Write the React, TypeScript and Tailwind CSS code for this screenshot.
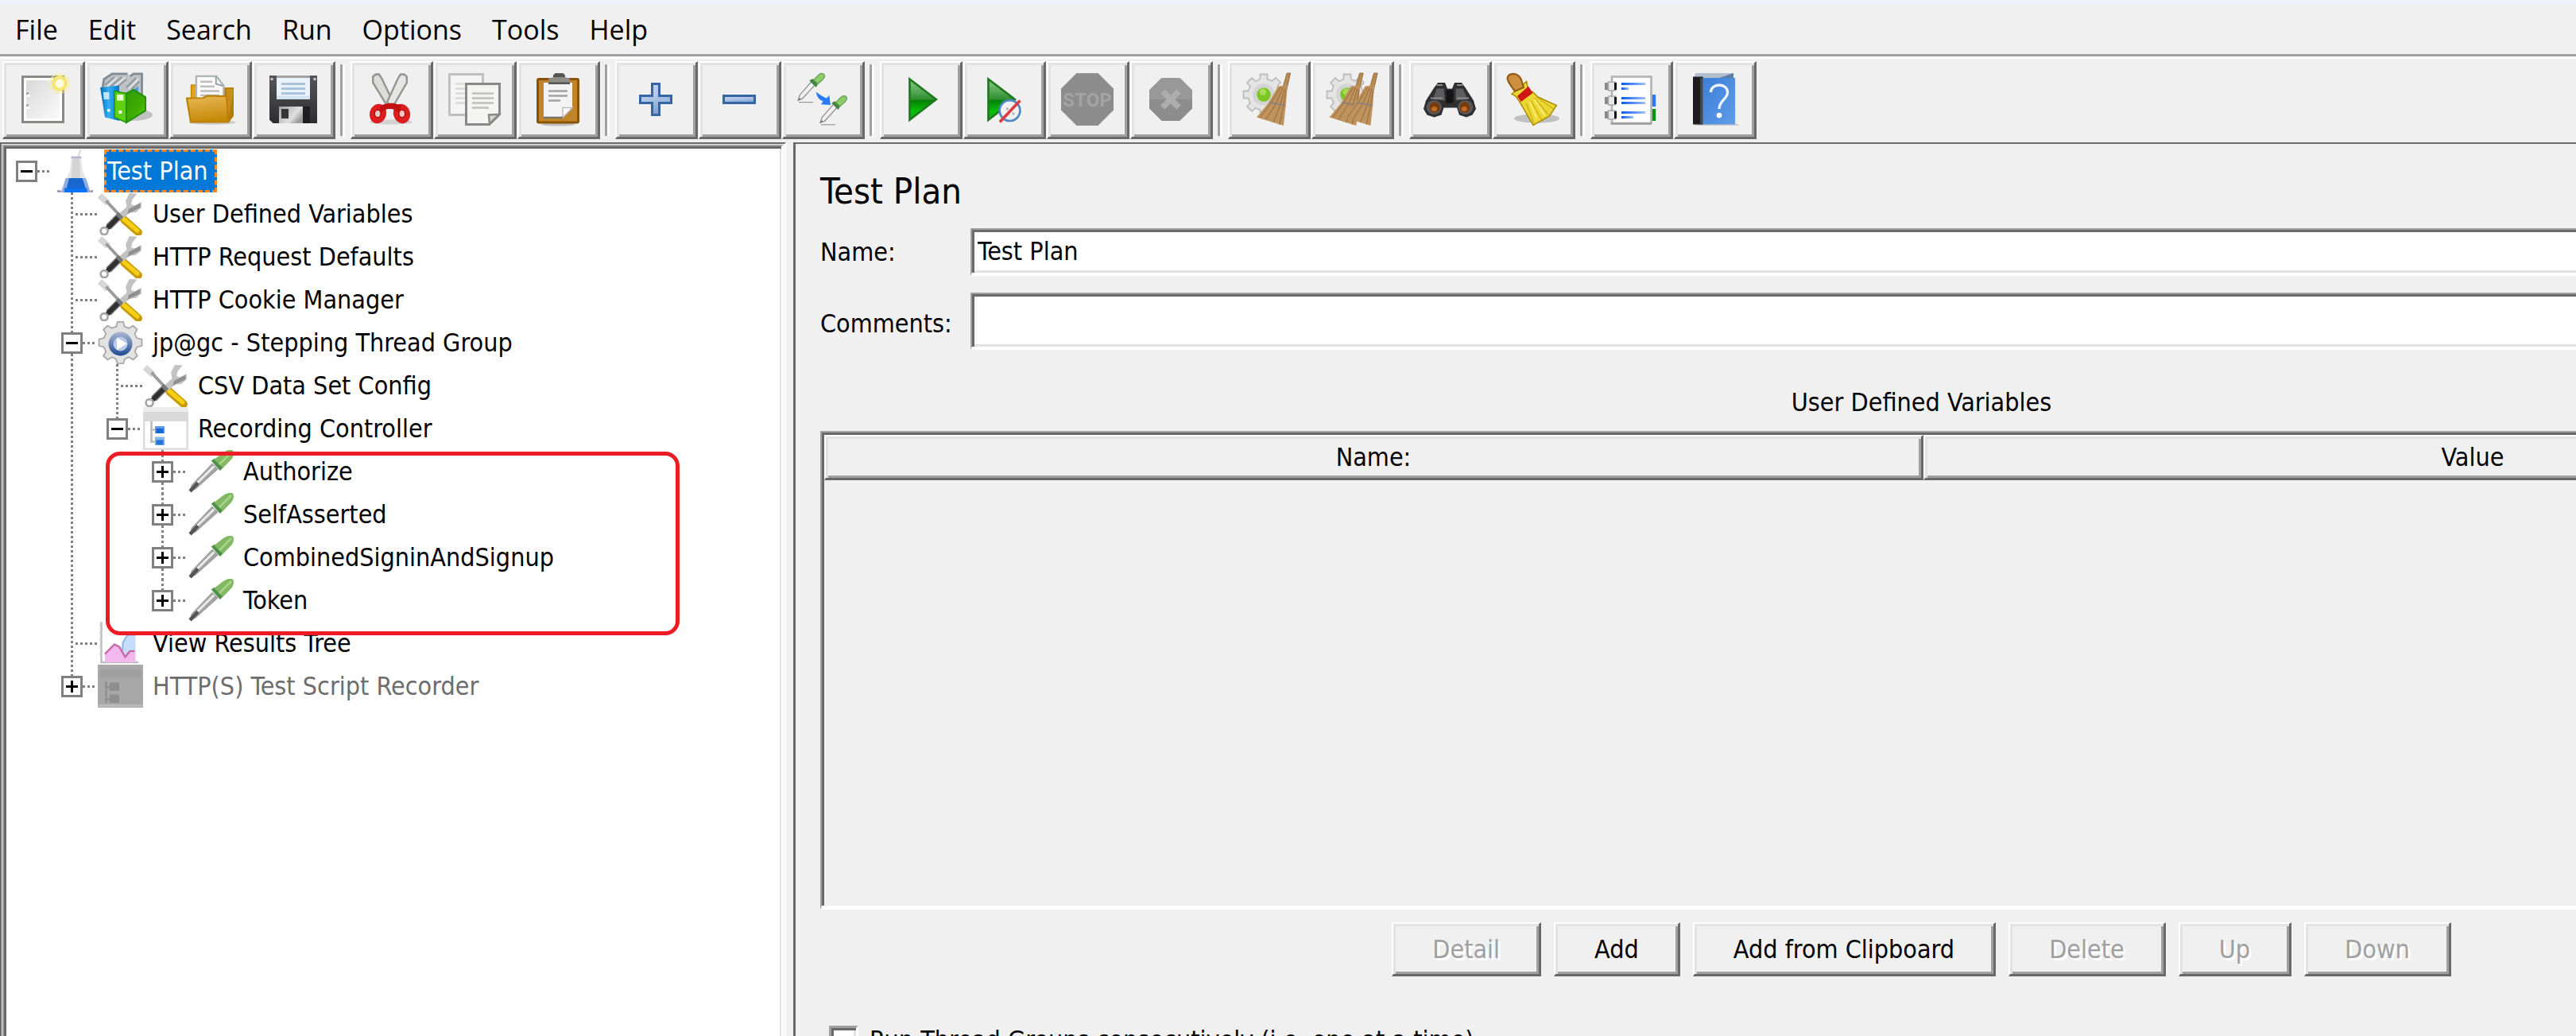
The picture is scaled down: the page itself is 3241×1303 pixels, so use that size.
import React from 'react';

type Icon = () => React.ReactElement;

/* ---------- toolbar icons, drawn on a 22-unit grid ---------- */

function Glyph({ children }: { children: React.ReactNode }) {
  return (
    <svg viewBox="0 0 22 22" className="size-[66px] overflow-visible" aria-hidden="true">
      {children}
    </svg>
  );
}

const NewIcon: Icon = () => (
  <Glyph>
    <defs>
      <linearGradient id="newPage" x1="0" y1="0" x2="1" y2="1">
        <stop offset="0" stopColor="#d9d9d9" />
        <stop offset="1" stopColor="#fafafa" />
      </linearGradient>
    </defs>
    <rect x="2.5" y="1.5" width="17" height="19" fill="#fff" stroke="#888a85" />
    <rect x="4" y="3" width="14" height="16" fill="url(#newPage)" />
    <path d="M4 8h1v1H4zM4 13h1v1H4z" fill="#aaa" />
    <path d="M4.3 9h1.2v1H4.3zM4.3 14h1.2v1H4.3z" fill="#fff" />
    <circle cx="18" cy="4.3" r="2.6" fill="#fffbe0" stroke="#f5e673" strokeWidth="1.5" />
    <circle cx="18" cy="4.3" r="4" fill="none" stroke="#f7ee9c" strokeWidth="0.6" opacity="0.7" />
  </Glyph>
);

const TemplatesIcon: Icon = () => (
  <Glyph>
    <defs>
      <linearGradient id="binderBlue" x1="0" y1="0" x2="1" y2="0">
        <stop offset="0" stopColor="#0a6db4" />
        <stop offset="0.45" stopColor="#35aef2" />
        <stop offset="1" stopColor="#0878c4" />
      </linearGradient>
      <linearGradient id="binderGreen" x1="0" y1="0" x2="1" y2="1">
        <stop offset="0" stopColor="#2f9a06" />
        <stop offset="0.6" stopColor="#3fae02" />
        <stop offset="1" stopColor="#66cf08" />
      </linearGradient>
    </defs>
    <ellipse cx="14" cy="17.5" rx="8" ry="2.4" fill="#000" opacity="0.2" />
    <path d="M1 6 1.6 2.5 5 .3h6.500l1 1L14 .3h4V11H3z" fill="#bfc3c6" />
    <path d="M1 6 1.600 2.500 5 .3h6.500M12.500 1.300 14 .3h3.500v9" fill="none" stroke="#7f8b92" strokeWidth="0.9" />
    <path d="M2 5l4-3.400M4 6l5-4.400M7 6l4-3.400M11 6l4-4M13 7l3.500-3.500" stroke="#8f989f" strokeWidth="0.7" />
    <path d="M3 5.500l4-3.600M5.500 6l5-4.200M12 6.500l4-4" stroke="#e3e5e6" strokeWidth="0.6" />
    <path d="M0 6l8-.8V20l-6-1.500z" fill="url(#binderBlue)" />
    <path d="M1.300 8h2.500v3H1.600z" fill="#bfe6ff" />
    <rect x="3" y="15" width="1.200" height="1.200" fill="#e4f6ff" />
    <path d="M13 7.500 16 5.500V8z" fill="#3f9edb" />
    <path d="M6 7.500 11 8.500V20.700L6 18.500z" fill="#5fd010" stroke="#1f9207" strokeWidth="0.5" />
    <path d="M11 8.500 14 7l5 3v5.700l-8 5z" fill="url(#binderGreen)" stroke="#1f9207" strokeWidth="0.7" />
    <rect x="7" y="9" width="2.800" height="2.500" fill="#eaffd5" />
    <rect x="7.800" y="15.700" width="1.300" height="1.300" fill="#fff" />
  </Glyph>
);

const OpenIcon: Icon = () => (
  <Glyph>
    <defs>
      <linearGradient id="folderFront" x1="0" y1="0" x2="0.2" y2="1">
        <stop offset="0" stopColor="#e9b95a" />
        <stop offset="1" stopColor="#c78a09" />
      </linearGradient>
    </defs>
    <ellipse cx="12" cy="20.600" rx="10" ry="1" fill="#000" opacity="0.15" />
    <path d="M3.200 5h2.500v6H3.200z" fill="#e3a41d" stroke="#c58706" strokeWidth="0.5" />
    <path d="M15 6h6v12l-2 2.600h-4z" fill="#b87a08" />
    <path d="M18 6.500h2.700v3L18.500 20z" fill="#d2951e" opacity="0.7" />
    <path d="M5.300 1.300h8.500l3 4V11H5.300z" fill="#fafafa" stroke="#adb5b5" strokeWidth="0.8" />
    <path d="M13.600 1.300v3.200l2.800.8" fill="none" stroke="#9aa5a5" strokeWidth="0.7" />
    <path d="M7 3.600h5M7 5.600h6M7 7.500h8M7 9.300h8" stroke="#bdbdbd" strokeWidth="0.8" />
    <path d="M1.300 10.500 8 10.400 10 9.500 18 9.700l.8 10.800H3z" fill="url(#folderFront)" stroke="#bb8006" strokeWidth="0.7" strokeLinejoin="round" />
  </Glyph>
);

const SaveIcon: Icon = () => (
  <Glyph>
    <defs>
      <linearGradient id="floppy" x1="0" y1="0" x2="0" y2="1">
        <stop offset="0" stopColor="#56565a" />
        <stop offset="1" stopColor="#2d2d2f" />
      </linearGradient>
      <linearGradient id="shutter" x1="0" y1="0" x2="1" y2="0.6">
        <stop offset="0" stopColor="#a3a3a3" />
        <stop offset="0.7" stopColor="#e0e0e0" />
        <stop offset="1" stopColor="#9a9a9a" />
      </linearGradient>
    </defs>
    <path d="M1 1h20v20H2.500L1 19.500z" fill="url(#floppy)" />
    <path d="M4 1h14v1H4z" fill="#a3a3a6" />
    <path d="M1.500 2h1v1h-1zM19.500 2h1v1h-1z" fill="#c9c9c9" />
    <rect x="4" y="2" width="14" height="9" fill="#eaf3fc" />
    <rect x="4" y="9.500" width="14" height="1.500" fill="#d3e2f0" />
    <path d="M6 4.500h10M6 6.500h10M6 8.500h10" stroke="#aac2da" />
    <rect x="5" y="14" width="13" height="7" fill="#1e1e20" />
    <rect x="5" y="14" width="10" height="7" fill="url(#shutter)" />
    <rect x="6" y="15" width="3" height="4" fill="#37373a" />
  </Glyph>
);

const CutIcon: Icon = () => (
  <Glyph>
    <ellipse cx="11" cy="20.500" rx="9" ry="1" fill="#000" opacity="0.12" />
    <path d="M3.400 1.500 4.500.5H6l1 1.500 4.800 10-1 1.800-1.600-.3L3.400 4z" fill="#dcdcd9" stroke="#93958f" strokeWidth="0.8" />
    <path d="M17.600 1.500 16.500.5H15l-1 1.500-4.600 10 .8 1.800 1.900-.3L17.600 4z" fill="#e6e6e4" stroke="#93958f" strokeWidth="0.8" />
    <ellipse cx="5.500" cy="17" rx="3.500" ry="4.100" fill="#dc1e1e" transform="rotate(15 5.500 17)" />
    <ellipse cx="15.500" cy="17" rx="3.500" ry="4.100" fill="#dc1e1e" transform="rotate(-15 15.500 17)" />
    <path d="M6.500 13.500 10 12.600h2l3.500.9-1 3-3-1.500h-2l-3 1.500z" fill="#c41010" />
    <ellipse cx="5.400" cy="17" rx="1.300" ry="1.600" fill="#f0c9c9" stroke="#b80d0d" strokeWidth="0.500" />
    <ellipse cx="15.600" cy="17" rx="1.300" ry="1.600" fill="#f0c9c9" stroke="#b80d0d" strokeWidth="0.500" />
  </Glyph>
);

const CopyIcon: Icon = () => (
  <Glyph>
    <rect x="0.500" y="0.500" width="14" height="17" fill="#f5f5f5" stroke="#c0c0c0" />
    <path d="M3 4.500h9M3 6.500h9M3 8.500h9M3 10.500h9M3 12.500h9" stroke="#dadada" strokeWidth="0.900" />
    <path d="M7.500 4.500h14v12.800l-4.300 4.200H7.500z" fill="#f4f4f3" stroke="#888a85" />
    <path d="M10 8.500h9M10 10.500h9M10 12.500h9M10 14.500h7" stroke="#bfbfbf" strokeWidth="0.900" />
    <path d="M21.300 17.300l-4 4-.3-3.800z" fill="#d5d5d3" stroke="#888a85" strokeWidth="0.800" />
  </Glyph>
);

const PasteIcon: Icon = () => (
  <Glyph>
    <ellipse cx="11" cy="21.500" rx="7" ry="0.700" fill="#000" opacity="0.2" />
    <rect x="2.500" y="2.500" width="17" height="18.200" rx="0.500" fill="#c1842a" stroke="#8a5205" />
    <path d="M5 4h12v10.500L13 18.600H5z" fill="#f3f3f3" />
    <path d="M17 14.500l-4 4.100V14.500z" fill="#fff" stroke="#bdbdbd" strokeWidth="0.500" />
    <path d="M5 18.600h8" stroke="#70706a" strokeWidth="0.700" />
    <path d="M7 7.500h8M7 9.500h8M7 11.500h5" stroke="#a3a3a3" strokeWidth="0.900" />
    <path d="M7 4.700V2.300l2-.6V.8l1-.8h3l1 .8v.9l2 .6v2.400z" fill="#8c8d84" />
    <path d="M9 1.700V.8l1-.8h3l1 .8v.9zM7 3.800h9v.9H7z" fill="#555753" />
  </Glyph>
);

const BarGradient = ({ id }: { id: string }) => (
  <defs>
    <linearGradient id={id} x1="0" y1="0" x2="0.3" y2="1">
      <stop offset="0" stopColor="#c3d6ee" />
      <stop offset="0.5" stopColor="#b0c7e6" />
      <stop offset="1" stopColor="#7fa4d6" />
    </linearGradient>
  </defs>
);

const PlusIcon: Icon = () => (
  <Glyph>
    <BarGradient id="plusFill" />
    <path d="M9.500 4.500h3v5h5v3h-5v5h-3v-5h-5v-3h5z" fill="url(#plusFill)" stroke="#3465a4" />
  </Glyph>
);

const MinusIcon: Icon = () => (
  <Glyph>
    <BarGradient id="minusFill" />
    <rect x="4.500" y="9.500" width="13" height="3" fill="url(#minusFill)" stroke="#3465a4" />
  </Glyph>
);

const SmallDropper = () => (
  <>
    <path d="M0.800 11.300 1.400 9.200 6.300 3.600 7.700 5 2.600 10.600z" fill="#f2f2f2" stroke="#9a9a9a" strokeWidth="0.500" />
    <path d="M0.700 11.400 1.600 10.600" stroke="#777" strokeWidth="0.600" />
    <path d="M5.800 3.200 6.800 2.600 8.700 4.700 8.200 5.600z" fill="#4a8a45" stroke="#3c7d38" strokeWidth="0.400" />
    <path d="M7.200 2.900 9.300.7c.9-.9 2.300-.6 2.500.2.200.9-.5 1.500-1 2L9 4.500z" fill="#90cb6b" stroke="#5a9f4c" strokeWidth="0.400" />
    <path d="M1 12.200h6" stroke="#999" strokeWidth="0.400" />
  </>
);

const ToggleIcon: Icon = () => (
  <Glyph>
    <SmallDropper />
    <g transform="translate(9.300 9.400)">
      <SmallDropper />
    </g>
    <path d="M8.200 7.800c.3 2 1.200 3.200 3 4l-.9 1.300 4 .2-.5-4-1.200 1.200C10.700 9.700 9.600 8.800 8.200 7.800z" fill="#2a7af5" />
  </Glyph>
);

const PlayGradient = ({ id }: { id: string }) => (
  <defs>
    <linearGradient id={id} x1="0" y1="0" x2="0" y2="1">
      <stop offset="0" stopColor="#8fca8f" />
      <stop offset="0.500" stopColor="#2f8f2f" />
      <stop offset="0.520" stopColor="#087f08" />
      <stop offset="0.800" stopColor="#05c205" />
      <stop offset="1" stopColor="#22a022" />
    </linearGradient>
  </defs>
);

const StartIcon: Icon = () => (
  <Glyph>
    <PlayGradient id="playFill" />
    <path d="M6.500 2.500 17.600 11 6.500 19.600z" fill="url(#playFill)" stroke="#1f7a1f" strokeWidth="0.900" />
  </Glyph>
);

const StartNoPausesIcon: Icon = () => (
  <Glyph>
    <PlayGradient id="playFill2" />
    <path d="M4.500 2.500 15.600 11 4.500 19.600z" fill="url(#playFill2)" stroke="#1f7a1f" strokeWidth="0.900" />
    <circle cx="13.500" cy="15.700" r="4.300" fill="#f1f1f1" stroke="#4f87c4" strokeWidth="0.900" />
    <path d="M12 14.500h1v1h-1zM14.500 16.500h1v1h-1z" fill="#b5b5b5" />
    <path d="M9.300 20.500 17.800 11.500" stroke="#df3a3f" strokeWidth="1.200" />
  </Glyph>
);

const StopIcon: Icon = () => (
  <Glyph>
    <path d="M6.500 0h9L22 6.500v9L15.500 22h-9L0 15.500v-9z" fill="#8d8d8d" />
    <text x="11" y="14" textAnchor="middle" fontSize="8" fontWeight="700" fill="#a3a3a3" fontFamily="Roboto, sans-serif">
      STOP
    </text>
  </Glyph>
);

const ShutdownIcon: Icon = () => (
  <Glyph>
    <path d="M7.200 2h7.600L20 7.200v7.600L14.800 20H7.200L2 14.800V7.200z" fill="#8d8d8d" />
    <path d="M7.200 2h7.600L20 7.200V11H2V7.200z" fill="#989898" />
    <path d="M7.600 7.600 14.400 14.400M14.400 7.600 7.600 14.400" stroke="#adadad" strokeWidth="2.500" />
  </Glyph>
);

const PaleGear = () => (
  <>
    <path
      d="M7.500 2.500V.5h3v2l2 .8 1.500-1.400 2 2-1.300 1.600.8 2h2v3h-2l-.8 2 1.300 1.500-2 2L12.500 14.600l-2 .8v1h-3v-1l-2-.8-1.500 1.400-2-2 1.300-1.500-.8-2H.5v-3h2l.8-2L2 4l2-2 1.500 1.400z"
      fill="#e4e4e4"
      stroke="#bdbdbd"
      strokeWidth="0.600"
    />
    <circle cx="9" cy="9" r="4.600" fill="#d4d4d4" />
    <circle cx="9" cy="9" r="2.900" fill="#7cc623" />
    <circle cx="8.600" cy="7.900" r="1.400" fill="#a3de55" />
  </>
);

const StrawBroom = () => (
  <>
    <path d="M18.700 0h1.500l-1.600 7h-1.900z" fill="#b98a55" stroke="#8f6536" strokeWidth="0.300" />
    <path d="M15 5.500 18.900 5l-.6 8-1 9-11.300-3.500 5-6z" fill="#c0935e" />
    <path d="M16 6 12 12.500 7.500 18.500M17 6 14 13 9.800 19.500M17.800 6.500 15.700 14 13 20.700M18.400 7 17.200 14 15.600 21.500" stroke="#9c7340" strokeWidth="0.400" fill="none" />
    <path d="M11.200 12.300 18 13.500" stroke="#8b8378" strokeWidth="0.600" />
  </>
);

const ClearIcon: Icon = () => (
  <Glyph>
    <PaleGear />
    <StrawBroom />
  </Glyph>
);

const ClearAllIcon: Icon = () => (
  <Glyph>
    <PaleGear />
    <g transform="translate(-4.500 0)">
      <StrawBroom />
    </g>
    <g transform="translate(1.500 0)">
      <StrawBroom />
    </g>
  </Glyph>
);

const SearchIcon: Icon = () => (
  <Glyph>
    <path d="M6 4h3l1 2.500h2L13 4h3l1.500 2 3.500 5.500 1 3.500-1.500 2.500-2.500 1-3-1-1-3H8.500l-1 3-3 1-3-1L0 15l1-3.500L4.500 6z" fill="#2f2f31" />
    <path d="M5.500 6.500h3l.500 5-5-.500zM13.500 6.500h3l2 4.500-5 .500z" fill="#5d5d60" />
    <path d="M9.500 7h3v5.500h-3z" fill="#151515" />
    <path d="M5.500 5h2.500M14 5h2.500M3 10.500h5M14 10.500h5" stroke="#8b8b8e" strokeWidth="0.700" />
    <ellipse cx="4.400" cy="14.300" rx="3.200" ry="3" fill="#59595c" />
    <ellipse cx="17.600" cy="14.300" rx="3.200" ry="3" fill="#59595c" />
    <ellipse cx="4.700" cy="14.300" rx="2.200" ry="2.200" fill="#7a3b0c" />
    <ellipse cx="17.300" cy="14.300" rx="2.200" ry="2.200" fill="#7a3b0c" />
    <ellipse cx="4.500" cy="15" rx="1.200" ry="1" fill="#c06a23" />
    <ellipse cx="17.100" cy="15" rx="1.200" ry="1" fill="#c06a23" />
  </Glyph>
);

const ResetSearchIcon: Icon = () => (
  <Glyph>
    <ellipse cx="12.500" cy="19" rx="9.500" ry="1.900" fill="#000" opacity="0.2" />
    <path d="M2 8.800 8.200 3.500 8.900 7 11 8l2 2 7.800 3.500-3 4.500-6.800 3.800-3.200-5.500L5 11.500 3.500 9.500z" fill="#ecd632" stroke="#a98d06" strokeWidth="0.500" />
    <path d="M.2 2.200C.2.700 2 0 3.600.4 5.200.9 6 2.400 6.300 3.700L7 6 3.300 7.600 1.600 5.200C.9 4.200.3 3.300.2 2.200z" fill="#cd8f40" stroke="#8f5a12" strokeWidth="0.700" />
    <path d="M8 12.500 11.300 21M10 11.500 14.500 19.500M11.500 10.500 17.500 17.500M12.500 10 19.500 15" stroke="#c9ad15" strokeWidth="0.400" />
    <path d="M9.500 12 12.500 19M11.500 11 16 18" stroke="#fbf07a" strokeWidth="0.600" />
    <path d="M4.300 9.700 9 5.500l1.800 2.800L5.900 12z" fill="#d11616" />
  </Glyph>
);

const FunctionIcon: Icon = () => (
  <Glyph>
    <defs>
      <linearGradient id="lineBlue" x1="0" y1="0" x2="1" y2="0">
        <stop offset="0" stopColor="#0a5bf0" />
        <stop offset="1" stopColor="#9cc0fb" />
      </linearGradient>
    </defs>
    <rect x="19" y="9" width="2.400" height="5" fill="#2b79f0" />
    <rect x="19" y="15" width="2.400" height="5" fill="#0b930b" />
    <rect x="3" y="1.500" width="16.500" height="19.500" fill="#fdfdfd" stroke="#b4b4b4" strokeWidth="0.900" />
    <path d="M2.500 21.200h17" stroke="#9b9b9b" strokeWidth="0.700" />
    <g fill="url(#lineBlue)">
      <rect x="7" y="4" width="10" height="1" />
      <rect x="7" y="6" width="3" height="1" />
      <rect x="7" y="10" width="10" height="1" />
      <rect x="7" y="12" width="10" height="1" />
      <rect x="7" y="16" width="10" height="1" />
      <rect x="7" y="18" width="5" height="1" />
    </g>
    {[4, 10, 16].map((y) => (
      <g key={y}>
        <rect x="0" y={y} width="1.500" height="3" fill="#888" />
        <rect x="1.500" y={y - 0.3} width="3" height="3.600" fill="#e8e8e8" stroke="#a9a9a9" strokeWidth="0.500" />
        <rect x="4" y={y} width="1" height="3" fill="#111" />
      </g>
    ))}
  </Glyph>
);

const HelpIcon: Icon = () => (
  <Glyph>
    <defs>
      <linearGradient id="bookBlue" x1="0" y1="0" x2="1" y2="1">
        <stop offset="0" stopColor="#3c7fd6" />
        <stop offset="1" stopColor="#5f9cea" />
      </linearGradient>
    </defs>
    <path d="M3 21.300h18v.7H3z" fill="#000" opacity="0.15" />
    <path d="M3 0h16v2H2.500z" fill="#b4bfcd" />
    <path d="M19 0v2h-6z" fill="#5b7da6" />
    <rect x="2" y="1.500" width="4.200" height="20" fill="#1c1c1e" />
    <rect x="5" y="2" width="1.200" height="19.500" fill="#44474d" />
    <rect x="6.200" y="2" width="13.500" height="19.500" fill="url(#bookBlue)" />
    <path d="M9.500 8c0-4 7-4 7 0 0 3-3.500 3.400-3.500 7" fill="none" stroke="#eef4fd" strokeWidth="1.100" />
    <circle cx="13" cy="17.700" r="1.100" fill="#fff" />
  </Glyph>
);

/* ---------- tree icons, drawn on a 19 x 18 grid ---------- */

function TreeGlyph({ children }: { children: React.ReactNode }) {
  return (
    <svg viewBox="0 0 19 18" className="h-[54px] w-[57px] shrink-0" aria-hidden="true">
      {children}
    </svg>
  );
}

const FlaskIcon: Icon = () => (
  <TreeGlyph>
    <path d="M2 17.500h15" stroke="#8d8d99" strokeWidth="0.900" />
    <path d="M8 3h4l.700 6 3.500 8.500h-13L7.300 9z" fill="#e6e6e6" />
    <path d="M8.500 3h2.800l.400 9H8z" fill="#d2d5d4" />
    <path d="M11.300 0h.900l-.900 3h-.800z" fill="#dcdcdc" />
    <path d="M7.800 3.300h4.400" stroke="#b3b8cf" strokeWidth="0.800" />
    <path d="M5.500 12h8.500l1.900 6H3.800z" fill="#8facdf" />
    <path d="M7 12h5.500l2 6H5.500z" fill="#1767cf" />
    <path d="M5 16.200h9.500v1.800H5z" fill="#0a74f5" />
  </TreeGlyph>
);

const ToolsIcon: Icon = () => (
  <TreeGlyph>
    <path d="M.8 1.300 4.300 4.500" stroke="#d6d6d6" strokeWidth="2.600" />
    <path d="M3.500 3.500 10 10.500" stroke="#9b9b9b" strokeWidth="1.300" />
    <path d="M11 11.400 17 16.700" stroke="#c99a08" strokeWidth="3.300" strokeLinecap="round" />
    <path d="M11 11.200 16.600 16" stroke="#f5cf14" strokeWidth="1.800" strokeLinecap="round" />
    <path d="M13.300.3 11.700 3.500l.500 2.500L8.700 9.200l1.800 1.800L13.500 8.500l2.500-.200 2.300-2V4l-2.800 1.500L14 5l.500-2 2-2.500z" fill="#c2c2c2" />
    <path d="M12.500 9 17.800 6.300V4.500L13 7z" fill="#8f8f8f" />
    <path d="M9.700 9.300 4.500 14.500" stroke="#777" strokeWidth="2.900" />
    <path d="M8.500 10.500 4 15" stroke="#303030" strokeWidth="2" />
    <circle cx="2.700" cy="16.200" r="1.500" fill="#fafafa" stroke="#a6a6a6" strokeWidth="0.900" />
  </TreeGlyph>
);

const GearIcon: Icon = () => (
  <TreeGlyph>
    <path
      d="M7.800 2.200 8.300.3h2.400l.500 1.900 1.800.7 1.800-1 1.700 1.600-1 1.800.8 1.700 2.200.6v2.700l-2.100.6-.8 1.800 1 1.800-1.700 1.600-1.900-1-1.700.8-.6 1.900H8.300l-.6-1.900-1.700-.8-1.900 1-1.700-1.600 1-1.800-.8-1.800-2.100-.6V7.600l2.100-.6.800-1.700-1-1.800 1.700-1.600 1.900 1z"
      fill="#e2e2e2"
      stroke="#a9a9a9"
      strokeWidth="0.600"
    />
    <defs>
      <linearGradient id="gearRing" x1="0" y1="0" x2="0" y2="1">
        <stop offset="0" stopColor="#a9b8d2" />
        <stop offset="1" stopColor="#1f4a94" />
      </linearGradient>
    </defs>
    <circle cx="9.500" cy="9.500" r="5" fill="url(#gearRing)" />
    <circle cx="9.500" cy="9.500" r="3" fill="#b9cbe8" />
    <path d="M8 6.800 12.300 9.400 8 12z" fill="#fff" />
  </TreeGlyph>
);

const ControllerIcon: Icon = () => (
  <TreeGlyph>
    <rect x="0.400" y="0.400" width="18.200" height="17.200" fill="#fff" stroke="#dcdcdc" strokeWidth="0.900" />
    <path d="M0 0h19v2H0z" fill="#ececec" />
    <path d="M0 2h19v4H0z" fill="#d9d9d9" />
    <path d="M3.500 6v9M3.500 9.500H5M3.500 14.500H5" stroke="#bdbdbd" strokeWidth="0.900" fill="none" />
    <path d="M5 8h4v3H5z" fill="#5d9ae6" />
    <path d="M5.500 9h3v2h-3z" fill="#1369dc" />
    <path d="M5 12.500h4v3.500H5z" fill="#86b4ec" />
    <path d="M5.500 13.800h3v2h-3z" fill="#2474dd" />
  </TreeGlyph>
);

const DisabledControllerIcon: Icon = () => (
  <TreeGlyph>
    <rect width="19" height="18" fill="#a8a8a8" />
    <path d="M1 2h17v3.500H1z" fill="#9f9f9f" />
    <path d="M0 17.200h19" stroke="#bababa" />
    <path d="M3.500 7v9M3.500 9.500H5M3.500 14.500H5" stroke="#909090" strokeWidth="0.900" fill="none" />
    <path d="M5 7.500h4v3.500H5zM5 12.500h4v3.500H5z" fill="#8e8e8e" />
  </TreeGlyph>
);

const DropperIcon: Icon = () => (
  <TreeGlyph>
    <path d="M.500 17.500 1.200 14.700 10 5.500 12.600 8 3.200 16.400z" fill="#a2a2a2" />
    <path d="M3 14.500 10.800 6.800" stroke="#e9e9e9" strokeWidth="1" />
    <path d="M.700 17.300 4 13.800" stroke="#555" strokeWidth="1.500" />
    <path d="M9.600 4.500 11 3.500 14.700 7.200 13.300 8.700z" fill="#4f8f49" />
    <path d="M10.800 4 14.500 1.100C16.500-.300 18.500-.500 18.900.700c.300 1.400-.2 2.400-1.100 3.500L14.500 7.600z" fill="#83b965" />
    <path d="M13 6 18 1" stroke="#a4d486" strokeWidth="0.900" />
  </TreeGlyph>
);

const ChartIcon: Icon = () => (
  <TreeGlyph>
    <path d="M1.500 0v17h15.500" stroke="#bcbcbc" strokeWidth="0.800" fill="none" />
    <path d="M.700 1.500h.8M.700 4.500h.8M.700 7.500h.8M.700 10.500h.8M.700 13.500h.8" stroke="#cfcfcf" strokeWidth="0.600" />
    <path d="M10 14 10.600 8.500 12.500 5.500h3.300V14z" fill="#c6dcfb" />
    <path d="M10.300 12 10.600 8.500 12.500 5.500h3.300" stroke="#8db7ef" strokeWidth="0.700" fill="none" />
    <path d="M3 13.500 7 9.500 9 10.500 11.500 15 14 12.500h1.800V17H3z" fill="#f3b8ee" />
    <path d="M3 13.500 7 9.500 9 10.500 11.500 14.800 13.500 12.300h2" stroke="#c86aa8" strokeWidth="0.800" fill="none" />
  </TreeGlyph>
);

/* ---------- shared bevels ---------- */

const raised =
  'border-t-2 border-l-2 border-r-3 border-b-3 border-t-white border-l-white border-r-[#696969] border-b-[#696969] shadow-[inset_3px_3px_0_#e3e3e3,inset_-3px_-3px_0_#a0a0a0]';

const sunkenField =
  'border-t-2 border-l-2 border-b-4 border-r-4 border-t-[#a0a0a0] border-l-[#a0a0a0] border-b-white border-r-white bg-white shadow-[inset_3px_3px_0_#696969,inset_0_-3px_0_#e3e3e3]';

/* ---------- toolbar ---------- */

const toolGroups: { label: string; icon: Icon; disabled?: boolean }[][] = [
  [
    { label: 'New', icon: NewIcon },
    { label: 'Templates', icon: TemplatesIcon },
    { label: 'Open', icon: OpenIcon },
    { label: 'Save', icon: SaveIcon },
  ],
  [
    { label: 'Cut', icon: CutIcon },
    { label: 'Copy', icon: CopyIcon },
    { label: 'Paste', icon: PasteIcon },
  ],
  [
    { label: 'Expand All', icon: PlusIcon },
    { label: 'Collapse All', icon: MinusIcon },
    { label: 'Toggle', icon: ToggleIcon },
  ],
  [
    { label: 'Start', icon: StartIcon },
    { label: 'Start no pauses', icon: StartNoPausesIcon },
    { label: 'Stop', icon: StopIcon, disabled: true },
    { label: 'Shutdown', icon: ShutdownIcon, disabled: true },
  ],
  [
    { label: 'Clear', icon: ClearIcon },
    { label: 'Clear All', icon: ClearAllIcon },
  ],
  [
    { label: 'Search', icon: SearchIcon },
    { label: 'Reset Search', icon: ResetSearchIcon },
  ],
  [
    { label: 'Function Helper', icon: FunctionIcon },
    { label: 'Help', icon: HelpIcon },
  ],
];

function Toolbar() {
  return (
    <div role="toolbar" aria-label="Main" className="flex shrink-0 items-center pt-[3px] pb-1 pl-[3px]">
      {toolGroups.map((group, i) => (
        <React.Fragment key={i}>
          {i > 0 && <div className="mr-[7px] ml-1.5 h-[90px] w-1.5 border-l-3 border-l-[#a0a0a0] bg-white" />}
          <div className="flex gap-px">
            {group.map(({ label, icon: I, disabled }) => (
              <button
                key={label}
                type="button"
                aria-label={label}
                disabled={disabled}
                className={`flex h-[98px] w-[104px] items-center justify-center pr-0.5 pb-0.5 ${raised}`}
              >
                <I />
              </button>
            ))}
          </div>
        </React.Fragment>
      ))}
    </div>
  );
}

/* ---------- test plan tree ---------- */

const dotsDown = 'w-[3px] bg-[repeating-linear-gradient(to_bottom,#808080_0_3px,transparent_3px_6px)]';
const dotsRight = 'h-[3px] bg-[repeating-linear-gradient(to_right,#808080_0_3px,transparent_3px_6px)]';

type Node = {
  label: string;
  icon: Icon;
  guides: boolean[];
  toggle?: 'plus' | 'minus';
  root?: boolean;
  last?: boolean;
  disabled?: boolean;
};

const nodes: Node[] = [
  { label: 'Test Plan', icon: FlaskIcon, guides: [], toggle: 'minus', root: true, last: true },
  { label: 'User Defined Variables', icon: ToolsIcon, guides: [false] },
  { label: 'HTTP Request Defaults', icon: ToolsIcon, guides: [false] },
  { label: 'HTTP Cookie Manager', icon: ToolsIcon, guides: [false] },
  { label: 'jp@gc - Stepping Thread Group', icon: GearIcon, guides: [false], toggle: 'minus' },
  { label: 'CSV Data Set Config', icon: ToolsIcon, guides: [false, true] },
  { label: 'Recording Controller', icon: ControllerIcon, guides: [false, true], toggle: 'minus', last: true },
  { label: 'Authorize', icon: DropperIcon, guides: [false, true, false], toggle: 'plus' },
  { label: 'SelfAsserted', icon: DropperIcon, guides: [false, true, false], toggle: 'plus' },
  { label: 'CombinedSigninAndSignup', icon: DropperIcon, guides: [false, true, false], toggle: 'plus' },
  { label: 'Token', icon: DropperIcon, guides: [false, true, false], toggle: 'plus', last: true },
  { label: 'View Results Tree', icon: ChartIcon, guides: [false] },
  {
    label: 'HTTP(S) Test Script Recorder',
    icon: DisabledControllerIcon,
    guides: [false],
    toggle: 'plus',
    last: true,
    disabled: true,
  },
];

function TreeRow({ node }: { node: Node }) {
  const I = node.icon;
  return (
    <li role="treeitem" aria-selected={!!node.root} className="flex h-[54px] items-stretch">
      {node.guides.map((on, i) => (
        <div key={i} className="flex w-[57px] shrink-0 justify-start pl-6">
          {on && <div className={dotsDown} />}
        </div>
      ))}
      {node.toggle ? (
        <div className="mr-px flex w-[57px] shrink-0 items-center pl-3">
          <div className="flex h-full w-[27px] flex-col items-center">
            <div className={`flex-1 ${node.root ? 'invisible' : ''} ${dotsDown}`} />
            <button
              type="button"
              aria-label={`${node.toggle === 'plus' ? 'Expand' : 'Collapse'} ${node.label}`}
              className="flex size-[27px] items-center justify-center border-3 border-[#808080] bg-white"
            >
              <svg viewBox="0 0 15 15" className="size-[15px]" aria-hidden="true">
                <path d={node.toggle === 'plus' ? 'M0 7.500h15M7.500 0v15' : 'M0 7.500h15'} stroke="#000" strokeWidth="3" />
              </svg>
            </button>
            <div className={`flex-1 ${node.last ? 'invisible' : ''} ${dotsDown}`} />
          </div>
          <div className={`w-[15px] ${dotsRight}`} />
        </div>
      ) : (
        <div className="mr-px flex w-[57px] shrink-0 items-center pl-6">
          <div className={`h-full ${dotsDown}`} />
          <div className={`ml-[3px] w-[27px] ${dotsRight}`} />
        </div>
      )}
      <I />
      <span
        className={`ml-2 flex items-center whitespace-nowrap ${
          node.root ? 'border-3 border-dashed border-[#ff8a25] bg-[#0078d7] pr-2 pl-px text-white' : 'px-1'
        } ${node.disabled ? 'text-[#6d6d6d]' : ''}`}
      >
        {node.label}
      </span>
    </li>
  );
}

function TreePanel() {
  return (
    <div className="flex w-[989px] shrink-0 border-t-2 border-r-2 border-l-2 border-t-[#696969] border-r-white border-l-[#696969] pt-px pr-px pl-px">
      <div className="relative flex-1 border-t-2 border-r-3 border-l-2 border-t-[#a0a0a0] border-r-white border-l-[#a0a0a0] bg-white pt-1 pl-[3px] shadow-[inset_3px_3px_0_#696969,inset_-2px_0_0_#e3e3e3]">
        <ul role="tree" aria-label="Test plan elements">
          {nodes.map((n) => (
            <TreeRow key={n.label} node={n} />
          ))}
        </ul>
        <div className="absolute top-[384px] left-32 h-[231px] w-[722px] rounded-[18px] border-5 border-[#ed1c24]" />
      </div>
    </div>
  );
}

/* ---------- editor panel ---------- */

const actions: { label: string; disabled?: boolean }[] = [
  { label: 'Detail', disabled: true },
  { label: 'Add' },
  { label: 'Add from Clipboard' },
  { label: 'Delete', disabled: true },
  { label: 'Up', disabled: true },
  { label: 'Down', disabled: true },
];

function EditorPanel() {
  return (
    <div className="ml-[9px] min-w-0 flex-1 overflow-hidden border-t-2 border-l-3 border-[#696969]">
      <div className="-mr-[562px] pl-[31px]">
        <h1 className="pt-8 text-[45px] leading-[56px]">Test Plan</h1>

        <div className="mt-[18px] grid grid-cols-[189px_1fr] items-center gap-y-[21px]">
          <label htmlFor="name">Name:</label>
          <input id="name" defaultValue="Test Plan" className={`h-[60px] min-w-0 pl-[7px] ${sunkenField}`} />
          <label htmlFor="comments" className="pt-1.5">
            Comments:
          </label>
          <input id="comments" className={`h-[72px] min-w-0 pl-[7px] ${sunkenField}`} />
        </div>

        <h2 id="vars" className="mt-[46px] text-center leading-10">
          User Defined Variables
        </h2>
        <div className="mt-4 h-[602px] border-t-2 border-l-2 border-b-5 border-t-[#a0a0a0] border-l-[#a0a0a0] border-b-white pt-[3px] pl-[3px] shadow-[inset_3px_3px_0_#696969]">
          <table aria-labelledby="vars" className="w-full table-fixed border-separate border-spacing-0">
            <thead>
              <tr>
                <th scope="col" className={`h-[57px] p-0 font-normal ${raised}`}>
                  Name:
                </th>
                <th scope="col" className={`h-[57px] p-0 font-normal ${raised}`}>
                  Value
                </th>
              </tr>
            </thead>
            <tbody />
          </table>
        </div>

        <div className="mt-4 flex justify-center gap-4">
          {actions.map(({ label, disabled }) => (
            <button
              key={label}
              type="button"
              disabled={disabled}
              className={`h-[68px] px-[49px] whitespace-nowrap ${raised} ${
                disabled ? 'text-[#a0a0a0] [text-shadow:3px_3px_0_#fff]' : ''
              }`}
            >
              {label}
            </button>
          ))}
        </div>

        <label className="mt-[60px] ml-[11px] flex items-center gap-[14px] whitespace-nowrap">
          <input
            type="checkbox"
            className="size-[37px] appearance-none border-3 border-t-[#a0a0a0] border-r-white border-b-white border-l-[#a0a0a0] bg-white shadow-[inset_3px_3px_0_#696969,inset_-3px_-3px_0_#e3e3e3]"
          />
          Run Thread Groups consecutively (i.e. one at a time)
        </label>
      </div>
    </div>
  );
}

const menus = ['File', 'Edit', 'Search', 'Run', 'Options', 'Tools', 'Help'];

export default function App() {
  return (
    <div className="flex h-screen flex-col overflow-hidden bg-[#f0f0f0] font-['DejaVu_Sans_Condensed','DejaVu_Sans',sans-serif] text-[32px] leading-10 text-black">
      <div className="h-1.5 shrink-0 bg-[#eff3fb]" />
      <nav
        aria-label="Menu"
        className="flex h-[65px] shrink-0 items-center border-b-3 border-[#a0a0a0] font-['Open_Sans',sans-serif] text-[34px]"
      >
        {menus.map((m) => (
          <button key={m} type="button" className="px-[19px]">
            {m}
          </button>
        ))}
      </nav>
      <div className="h-[3px] shrink-0 bg-white" />
      <Toolbar />
      <main className="flex min-h-0 flex-1">
        <TreePanel />
        <EditorPanel />
      </main>
    </div>
  );
}
